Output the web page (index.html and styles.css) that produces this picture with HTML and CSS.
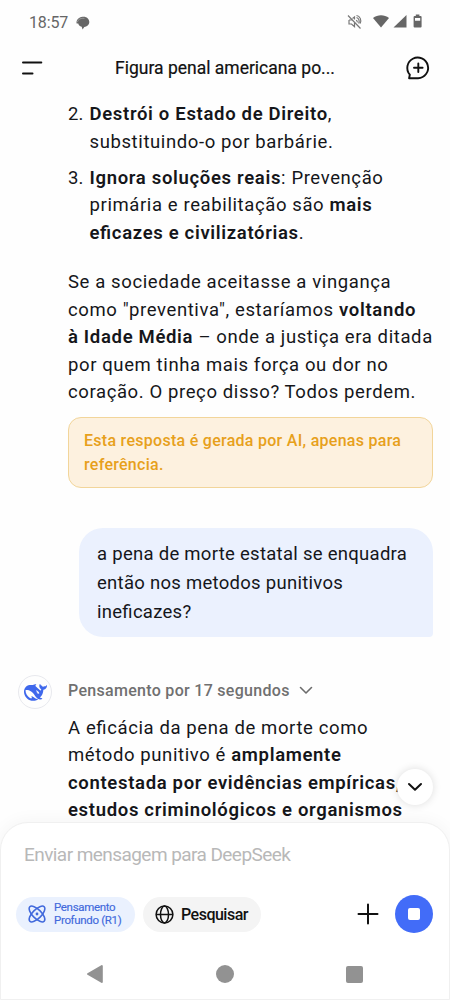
FILE: index.html
```html
<!DOCTYPE html>
<html lang="pt">
<head>
<meta charset="utf-8">
<meta name="viewport" content="width=device-width, initial-scale=1">
<title>DeepSeek</title>
<link rel="stylesheet" href="styles.css">
</head>
<body>
<div class="app">
  <div class="status">
    <div class="status-left">
      <span>18:57</span>
      <svg width="14" height="14" viewBox="0 0 14 14"><path d="M6.600.800C10 .200 13.300 2.500 13.300 6c0 3-2.500 4.700-5 4.900L6.600 13.500 5.700 10.800C3.700 10.400 2.400 9 2.300 7.600L.600 7.400C0 4.200 2.600 1.300 6.600.800Z" fill="#666"/><path d="M1.300 6.200C1.800 3.400 5 1.700 8.500 2.300" fill="none" stroke="#aaa" stroke-width=".7"/></svg>
    </div>
    <svg class="status-right" width="78" height="18" viewBox="0 0 78 18">
      <g fill="none" stroke="#777" stroke-width="1.200"><path d="M2 2.500 14.500 15.500M3 7v4h2.500l3 2.700V10M6.500 5.500 8.500 4v2.500M10.500 4.500c2.500.8 3.300 3.500 2.200 6M10 7.200c1 .3 1.500 1.200 1.200 2.200M3 7h2.500M10.500 2.500c3.500.5 5.300 4.500 3.700 8"/></g>
      <g fill="#666"><path d="M27 5C31.600 1.300 38.400 1.300 43 5L35 14.500Z"/><path d="M60.500 2v12.500H47.500Z"/><path fill-rule="evenodd" d="M69.800 1.400h3.600v1.500h1.200q1 0 1 1v9.600q0 1-1 1h-6q-1 0-1-1V3.900q0-1 1-1h1.200ZM69 5v2.800h5.200V5Z"/></g>
    </svg>
  </div>
  <header class="header">
    <svg width="22" height="16" viewBox="0 0 22 16"><path d="M1 2.500h18.300M1 13.500h9.500" stroke="#111" stroke-width="2" stroke-linecap="round"/></svg>
    <h1 class="title">Figura penal americana po...</h1>
    <svg width="26" height="26" viewBox="0 0 26 26" fill="none" stroke="#111" stroke-width="1.900" stroke-linecap="round" stroke-linejoin="round"><path d="M13.100 23.300H4.100l.700-3.600A10.400 10.400 0 1 1 13.100 23.300Z"/><path d="M13.300 8.500v8.600M9 12.800h8.600"/></svg>
  </header>
  <main class="chat">
    <ol class="list" start="2">
      <li><span class="num">2.</span><div><b>Destrói o Estado de Direito</b>,<br>substituindo-o por barbárie.</div></li>
      <li><span class="num">3.</span><div><b>Ignora soluções reais</b>: Prevenção<br>primária e reabilitação são <b>mais<br>eficazes e civilizatórias</b>.</div></li>
    </ol>
    <p class="para">Se a sociedade aceitasse a vingança<br>como "preventiva", estaríamos <b>voltando<br>à Idade Média</b> – onde a justiça era ditada<br>por quem tinha mais força ou dor no<br>coração. O preço disso? Todos perdem.</p>
    <div class="notice">Esta resposta é gerada por AI, apenas para<br>referência.</div>
    <div class="bubble">a pena de morte estatal se enquadra<br>então nos metodos punitivos<br>ineficazes?</div>
    <section class="reply">
      <div class="avatar"><svg width="23" height="23" viewBox="0 0 24 24"><path fill="#3f68ec" d="M23.748 4.482c-.254-.124-.364.113-.512.234-.051.039-.094.09-.137.136-.372.397-.806.657-1.373.626-.829-.046-1.537.214-2.163.848-.133-.782-.575-1.248-1.247-1.548-.352-.156-.708-.311-.955-.65-.172-.241-.219-.51-.305-.774-.055-.16-.11-.323-.293-.35-.2-.031-.278.136-.356.276-.313.572-.434 1.202-.422 1.84.027 1.436.633 2.58 1.838 3.393.137.093.172.187.129.323-.082.28-.18.552-.266.833-.055.179-.137.217-.329.14a5.526 5.526 0 01-1.736-1.18c-.857-.828-1.631-1.742-2.597-2.458a11.365 11.365 0 00-.689-.471c-.985-.957.13-1.743.388-1.836.27-.098.093-.432-.779-.428-.872.004-1.67.295-2.687.684a3.055 3.055 0 01-.465.137 9.597 9.597 0 00-2.883-.102c-1.885.21-3.39 1.102-4.497 2.623C.082 8.606-.231 10.684.152 12.85c.403 2.284 1.569 4.175 3.36 5.653 1.858 1.533 3.997 2.284 6.438 2.14 1.482-.085 3.133-.284 4.994-1.86.47.234.962.327 1.78.397.63.059 1.236-.03 1.705-.128.735-.156.684-.837.419-.961-2.155-1.004-1.682-.595-2.113-.926 1.096-1.296 2.746-2.642 3.392-7.003.05-.347.007-.565 0-.845-.004-.17.035-.237.23-.256a4.173 4.173 0 001.545-.475c1.396-.763 1.96-2.015 2.093-3.517.02-.23-.004-.467-.247-.588zM11.581 18c-2.089-1.642-3.102-2.183-3.52-2.16-.392.024-.321.471-.235.763.09.288.207.486.371.739.114.167.192.416-.113.603-.673.416-1.842-.14-1.897-.167-1.361-.802-2.5-1.86-3.301-3.307-.774-1.393-1.224-2.887-1.298-4.482-.02-.386.093-.522.477-.592a4.696 4.696 0 011.529-.039c2.132.312 3.946 1.265 5.468 2.774.868.86 1.525 1.887 2.202 2.891.72 1.066 1.494 2.082 2.48 2.914.348.292.625.514.891.677-.802.09-2.14.11-3.054-.614zm1-6.44a.306.306 0 01.415-.287.302.302 0 01.2.288.306.306 0 01-.31.307.303.303 0 01-.304-.308zm3.11 1.596c-.2.081-.399.151-.59.16a1.245 1.245 0 01-.798-.254c-.274-.23-.47-.358-.552-.758a1.73 1.73 0 01.016-.588c.07-.327-.008-.537-.239-.727-.187-.156-.426-.199-.688-.199a.559.559 0 01-.254-.078c-.11-.054-.2-.19-.114-.358.028-.054.16-.186.192-.21.356-.202.767-.136 1.146.016.352.144.618.408 1.001.782.391.451.462.576.685.914.176.265.336.537.445.848.067.195-.019.354-.25.452z"/></svg></div>
      <div class="reply-body">
        <div class="thinking"><span>Pensamento por 17 segundos</span><svg width="14" height="9" viewBox="0 0 14 9"><path d="M1.500 1.500 7 7l5.500-5.500" fill="none" stroke="#6c6c6c" stroke-width="1.600" stroke-linecap="round" stroke-linejoin="round"/></svg></div>
        <p class="answer">A eficácia da pena de morte como<br>método punitivo é <b>amplamente<br>contestada por evidências empíricas,<br>estudos criminológicos e organismos</b></p>
      </div>
    </section>
    <button class="scroll-down" aria-label="Descer"><svg width="16" height="10" viewBox="0 0 16 10"><path d="M2 2l6 5.800L14 2" fill="none" stroke="#111" stroke-width="2" stroke-linecap="round" stroke-linejoin="round"/></svg></button>
  </main>
  <footer class="composer">
    <div class="placeholder">Enviar mensagem para DeepSeek</div>
    <div class="tools">
      <button class="pill think"><svg width="18" height="18" viewBox="0 0 18 18" fill="none" stroke="#4169dc" stroke-width="1.500"><ellipse cx="9" cy="9" rx="10.200" ry="4.400" transform="rotate(45 9 9)"/><ellipse cx="9" cy="9" rx="10.200" ry="4.400" transform="rotate(-45 9 9)"/><circle cx="9" cy="9" r="1.400" fill="#4169dc" stroke="none"/></svg><span>Pensamento<br>Profundo (R1)</span></button>
      <button class="pill search"><svg width="19" height="19" viewBox="0 0 19 19" fill="none" stroke="#111" stroke-width="1.500"><circle cx="9.500" cy="9.500" r="8.400"/><ellipse cx="9.500" cy="9.500" rx="4" ry="8.400"/><path d="M1.100 9.500h16.800"/></svg><span>Pesquisar</span></button>
      <svg class="plus" width="22" height="22" viewBox="0 0 22 22"><path d="M11 1.500v19M1.500 11h19" stroke="#111" stroke-width="2" stroke-linecap="round"/></svg>
      <button class="stop" aria-label="Parar"><span></span></button>
    </div>
    <nav class="nav">
      <svg width="18" height="20" viewBox="0 0 18 20"><path d="M15.800 2v16L2 10Z" fill="#929292" stroke="#929292" stroke-width="2" stroke-linejoin="round"/></svg>
      <span class="home"></span>
      <span class="recent"></span>
    </nav>
  </footer>
</div>
</body>
</html>
```
FILE: styles.css
```css
* { box-sizing: border-box; margin: 0; padding: 0; }
body { width: 450px; height: 1000px; overflow: hidden; background: #fefefe; font-family: Roboto, sans-serif; font-feature-settings: "liga" 1; color: #15161a; }
button { border: 0; font: inherit; }
svg { display: block; flex: none; overflow: visible; }
b { font-weight: 600; letter-spacing: .67px; }
.app { display: flex; flex-direction: column; height: 1000px; }
.status { display: flex; justify-content: space-between; height: 44px; padding: 13px 26px 0 29px; color: #666; }
.status-left { display: flex; align-items: center; height: 19px; gap: 8px; font-size: 16px; letter-spacing: -.15px; }
.header { display: flex; align-items: center; justify-content: space-between; height: 48px; padding: 0 19px 0 23px; }
.header > svg:first-child { margin-left: -1px; margin-right: 1px; }
.title { font-size: 17.500px; font-weight: 400; line-height: 24px; color: #111; letter-spacing: 0; -webkit-text-stroke: .2px #111; }
.chat { position: relative; height: 730px; padding: 9px 17px 0 68px; flex: none; font-size: 18.500px; line-height: 27.5px; letter-spacing: .61px; }
.chat p, .list, .bubble, .notice, .thinking { white-space: nowrap; }
.list { list-style: none; display: flex; flex-direction: column; gap: 8.500px; }
.list li { display: flex; }
.num { width: 21.500px; flex: none; letter-spacing: 0; }
.para { margin-top: 22px; }
.notice { margin-top: 10.500px; height: 71px; border: 1px solid #f2d59a; border-radius: 13px; background: #fdf1df; color: #e7a01b; padding: 10.500px 15px; font-size: 16px; font-weight: 500; line-height: 24.500px; letter-spacing: .28px; }
.bubble { margin: 40px 0 0 11px; height: 109px; background: #ebf1fe; border-radius: 24px 24px 4px 24px; padding: 12px 18px; line-height: 29px; letter-spacing: .28px; }
.reply { display: flex; margin: 38px 0 0 -50px; }
.avatar { width: 34px; height: 34px; margin-right: 16px; border: 1px solid #e8e9ee; border-radius: 50%; display: grid; place-items: center; flex: none; }
.thinking { display: flex; align-items: center; gap: 9px; height: 31px; color: #707070; font-size: 16px; font-weight: 500; letter-spacing: .3px; }
.answer { margin-top: 8.500px; }
.scroll-down { position: absolute; right: 17px; bottom: 17px; width: 36px; height: 36px; border-radius: 50%; background: #fff; display: grid; place-items: center; box-shadow: 0 0 8px #0002; }
.composer { position: relative; flex: 1; background: #fff; border: 1px solid #f0f0f0; border-radius: 28px 28px 0 0; padding: 19px 16px 0 15px; box-shadow: 0 0 18px #0000000c; }
.placeholder { padding-left: 8px; font-size: 19px; line-height: 26px; color: #b8b8b8; letter-spacing: -.56px; }
.tools { display: flex; align-items: center; height: 38px; margin-top: 27px; }
.pill { display: flex; align-items: center; height: 35px; border-radius: 18px; white-space: nowrap; }
.think { width: 119px; padding-left: 12px; gap: 8px; background: #eaf1fe; color: #4169dc; font-size: 11.500px; line-height: 13px; letter-spacing: -.33px; text-align: left; -webkit-text-stroke: .15px #4169dc; }
.search { width: 118px; margin-left: 8px; padding-left: 12px; gap: 7px; background: #f4f4f4; color: #111; font-size: 16px; font-weight: 500; letter-spacing: -.5px; }
.plus { margin-left: auto; }
.stop { width: 38px; height: 38px; margin-left: 16px; border-radius: 50%; background: #426cf8; display: grid; place-items: center; }
.stop span { width: 12px; height: 12px; border-radius: 2px; background: #fff; }
.nav { display: flex; justify-content: space-between; align-items: center; margin-top: 31px; padding: 0 70px; height: 20px; }
.home { width: 18px; height: 18px; border-radius: 50%; background: #929292; }
.recent { width: 17px; height: 17px; border-radius: 2px; background: #929292; }
```
